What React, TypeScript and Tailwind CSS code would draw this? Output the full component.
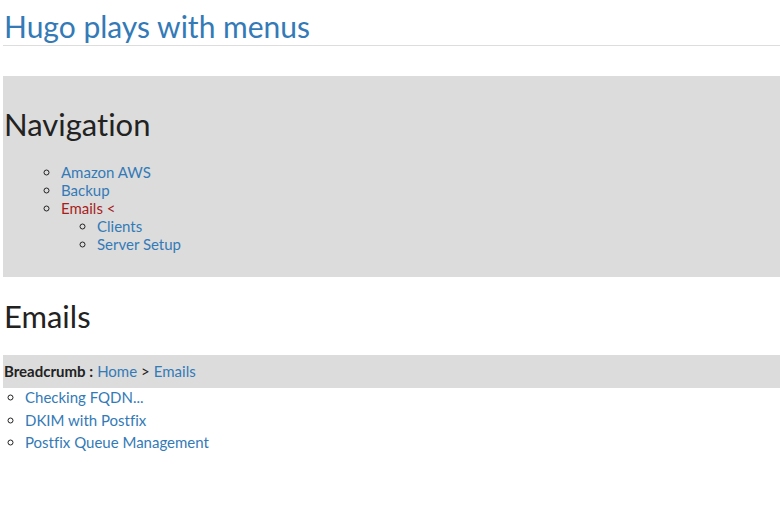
import React from 'react'

const link = 'text-[#337ab7]'

export default function App() {
  const nav = [
    { label: 'Amazon AWS' },
    { label: 'Backup' },
    { label: 'Emails', active: true, children: ['Clients', 'Server Setup'] },
  ]
  const posts = ['Checking FQDN...', 'DKIM with Postfix', 'Postfix Queue Management']

  return (
    <div className="min-h-[518px] bg-white pl-[3px] text-[15px] text-[#222] font-['Lato',sans-serif] [font-variant-ligatures:none]">
      {/* Header */}
      <header className="border-b border-[#dddddd] pt-[8px]">
        <h1 className={`text-[30px] leading-[37px] pl-[1px] ${link}`}>Hugo plays with menus</h1>
      </header>

      {/* Navigation */}
      <nav className="mt-[30px] bg-[#dcdcdc] h-[201px] pt-[28px]">
        <h2 className="text-[31px] leading-[40px] pl-[1px]">Navigation</h2>
        <ul className="mt-[19px] pl-[58px] list-[circle] leading-[18px]">
          {nav.map((item) => (
            <li key={item.label}>
              {item.active ? (
                <span className="text-[#a81c1c]">{item.label} &lt;</span>
              ) : (
                <a className={link}>{item.label}</a>
              )}
              {item.children && (
                <ul className="pl-[36px] list-[circle]">
                  {item.children.map((c) => (
                    <li key={c}>
                      <a className={link}>{c}</a>
                    </li>
                  ))}
                </ul>
              )}
            </li>
          ))}
        </ul>
      </nav>

      {/* Section */}
      <h2 className="mt-[19px] text-[31px] leading-[40px] pl-[1px]">Emails</h2>
      <div className="mt-[19px] bg-[#dcdcdc] h-[33px] flex items-center pl-[1px]">
        <span className="font-bold">Breadcrumb :</span>
        <a className={`${link} ml-[4px]`}>Home</a>
        <span className="mx-[4px]">&gt;</span>
        <a className={link}>Emails</a>
      </div>
      <ul className="-mt-[2px] pl-[22px] list-[circle] leading-[22.5px]">
        {posts.map((p) => (
          <li key={p}>
            <a className={link}>{p}</a>
          </li>
        ))}
      </ul>
    </div>
  )
}
